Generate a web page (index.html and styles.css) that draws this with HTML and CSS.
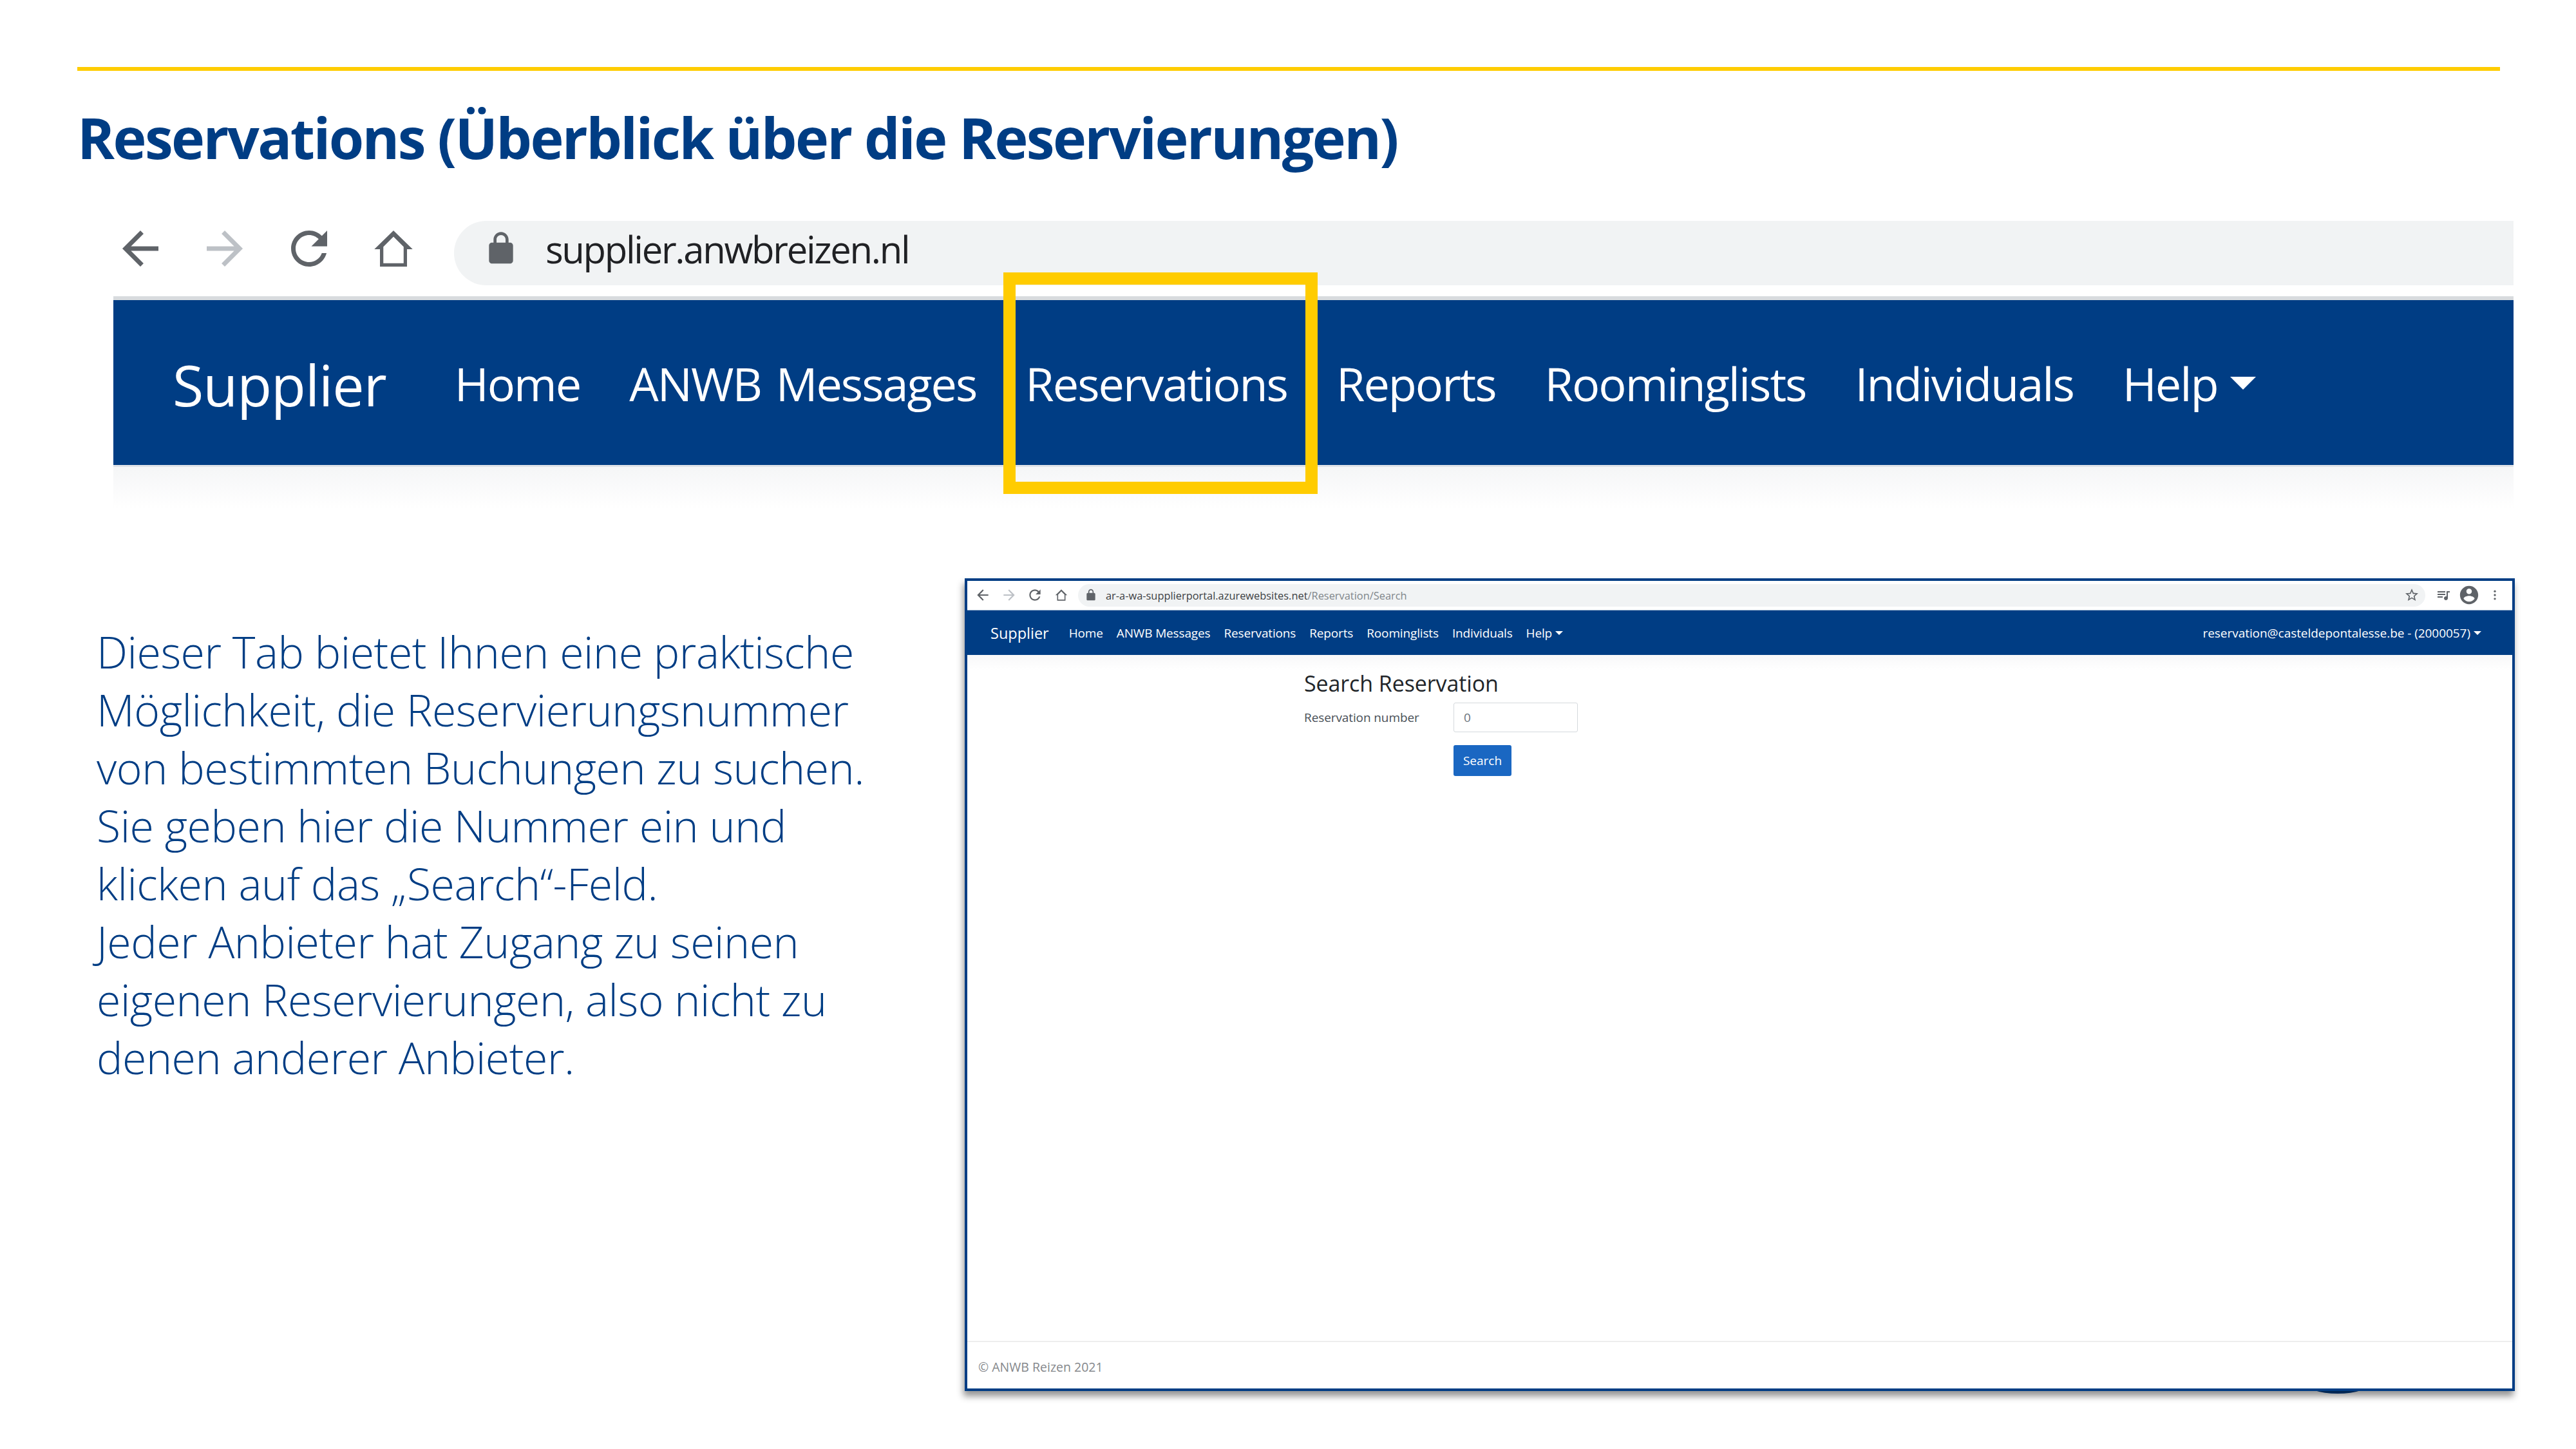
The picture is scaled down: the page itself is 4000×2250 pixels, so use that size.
FILE: index.html
```html
<!DOCTYPE html>
<html lang="de">
<head>
<meta charset="utf-8">
<title>Reservations</title>
<link rel="stylesheet" href="styles.css">
</head>
<body>
<main class="slide">
  <div class="rule"></div>
  <h1 class="title">Reservations (Überblick über die Reservierungen)</h1>

  <section class="hero">
    <div class="hero-toolbar">
      <svg class="hero-icon" viewBox="0 0 24 24"><path d="M20 11H7.83l5.59-5.59L12 4l-8 8 8 8 1.41-1.41L7.83 13H20v-2z"/></svg>
      <svg class="hero-icon faded" viewBox="0 0 24 24"><path d="M12 4l-1.41 1.41L16.17 11H4v2h12.17l-5.58 5.59L12 20l8-8z"/></svg>
      <svg class="hero-icon" viewBox="0 0 24 24"><path d="M17.65 6.35C16.2 4.9 14.21 4 12 4c-4.42 0-7.99 3.58-7.99 8s3.57 8 7.99 8c3.73 0 6.84-2.55 7.73-6h-2.08c-.82 2.33-3.04 4-5.65 4-3.31 0-6-2.69-6-6s2.69-6 6-6c1.66 0 3.14.69 4.22 1.78L13 11h7V4l-2.35 2.35z"/></svg>
      <svg class="hero-icon" viewBox="0 0 24 24"><path fill-rule="evenodd" d="M12 4L3.5 12.3H6V20h12v-7.7h2.5L12 4zM16.5 18.5h-9v-7.3L12 6.7l4.5 4.5v7.3z"/></svg>
      <div class="hero-address">
        <svg class="hero-lock" viewBox="0 0 24 24"><path d="M18 8h-1V6c0-2.76-2.24-5-5-5S7 3.24 7 6v2H6c-1.1 0-2 .9-2 2v10c0 1.1.9 2 2 2h12c1.1 0 2-.9 2-2V10c0-1.1-.9-2-2-2zM9 6c0-1.66 1.34-3 3-3s3 1.34 3 3v2H9V6z"/></svg>
        <span class="hero-url">supplier.anwbreizen.nl</span>
      </div>
    </div>
    <nav class="hero-nav">
      <span class="hero-brand">Supplier</span>
      <span class="hero-link">Home</span>
      <span class="hero-link">ANWB Messages</span>
      <span class="hero-link">Reservations</span>
      <span class="hero-link">Reports</span>
      <span class="hero-link">Roominglists</span>
      <span class="hero-link">Individuals</span>
      <span class="hero-link">Help<i class="hero-caret"></i></span>
    </nav>
    <div class="hero-shade"></div>
    <div class="highlight"></div>
  </section>

  <section class="content">
    <div class="copy">
      <p>Dieser Tab bietet Ihnen eine praktische</p>
      <p>Möglichkeit, die Reservierungsnummer</p>
      <p>von bestimmten Buchungen zu suchen.</p>
      <p>Sie geben hier die Nummer ein und</p>
      <p>klicken auf das „Search“-Feld.</p>
      <p>Jeder Anbieter hat Zugang zu seinen</p>
      <p>eigenen Reservierungen, also nicht zu</p>
      <p>denen anderer Anbieter.</p>
    </div>

    <div class="shot">
      <div class="shot-blob"></div>
      <div class="shot-frame">
        <div class="shot-toolbar">
          <svg class="shot-icon" viewBox="0 0 24 24"><path d="M20 11H7.83l5.59-5.59L12 4l-8 8 8 8 1.41-1.41L7.83 13H20v-2z"/></svg>
          <svg class="shot-icon faded" viewBox="0 0 24 24"><path d="M12 4l-1.41 1.41L16.17 11H4v2h12.17l-5.58 5.59L12 20l8-8z"/></svg>
          <svg class="shot-icon" viewBox="0 0 24 24"><path d="M17.65 6.35C16.2 4.9 14.21 4 12 4c-4.42 0-7.99 3.58-7.99 8s3.57 8 7.99 8c3.73 0 6.84-2.55 7.73-6h-2.08c-.82 2.33-3.04 4-5.65 4-3.31 0-6-2.69-6-6s2.69-6 6-6c1.66 0 3.14.69 4.22 1.78L13 11h7V4l-2.35 2.35z"/></svg>
          <svg class="shot-icon" viewBox="0 0 24 24"><path fill-rule="evenodd" d="M12 4L3.5 12.3H6V20h12v-7.7h2.5L12 4zM16.5 18.5h-9v-7.3L12 6.7l4.5 4.5v7.3z"/></svg>
          <div class="shot-address">
            <svg class="shot-lock" viewBox="0 0 24 24"><path d="M18 8h-1V6c0-2.76-2.24-5-5-5S7 3.24 7 6v2H6c-1.1 0-2 .9-2 2v10c0 1.1.9 2 2 2h12c1.1 0 2-.9 2-2V10c0-1.1-.9-2-2-2zM9 6c0-1.66 1.34-3 3-3s3 1.34 3 3v2H9V6z"/></svg>
            <span class="shot-url">ar-a-wa-supplierportal.azurewebsites.net<span class="shot-path">/Reservation/Search</span></span>
            <svg class="shot-star" viewBox="0 0 24 24"><path d="M22 9.24l-7.19-.62L12 2 9.19 8.63 2 9.24l5.46 4.73L5.82 21 12 17.27 18.18 21l-1.63-7.03L22 9.24zM12 15.4l-3.76 2.27 1-4.28-3.32-2.88 4.38-.38L12 6.1l1.71 4.04 4.38.38-3.32 2.88 1 4.28L12 15.4z"/></svg>
          </div>
          <svg class="shot-tool" viewBox="0 0 24 24"><path d="M15 6H3v2h12V6zm0 4H3v2h12v-2zM3 16h8v-2H3v2zM17 6v8.18c-.31-.11-.65-.18-1-.18-1.66 0-3 1.34-3 3s1.34 3 3 3 3-1.34 3-3V8h3V6h-5z"/></svg>
          <svg class="shot-account" viewBox="0 0 24 24"><path d="M12 2C6.48 2 2 6.48 2 12s4.48 10 10 10 10-4.48 10-10S17.52 2 12 2zm0 3c1.66 0 3 1.34 3 3s-1.34 3-3 3-3-1.34-3-3 1.34-3 3-3zm0 14.2c-2.5 0-4.71-1.28-6-3.22.03-1.99 4-3.08 6-3.08 1.99 0 5.97 1.09 6 3.08-1.29 1.94-3.5 3.22-6 3.22z"/></svg>
          <svg class="shot-dots" viewBox="0 0 24 24"><circle cx="12" cy="5" r="2"/><circle cx="12" cy="12" r="2"/><circle cx="12" cy="19" r="2"/></svg>
        </div>
        <nav class="shot-nav">
          <span class="shot-brand">Supplier</span>
          <span class="shot-link">Home</span>
          <span class="shot-link">ANWB Messages</span>
          <span class="shot-link">Reservations</span>
          <span class="shot-link">Reports</span>
          <span class="shot-link">Roominglists</span>
          <span class="shot-link">Individuals</span>
          <span class="shot-link">Help<i class="shot-caret"></i></span>
          <span class="shot-user">reservation@casteldepontalesse.be - (2000057)<i class="shot-caret"></i></span>
        </nav>
        <div class="shot-main">
          <h2 class="shot-heading">Search Reservation</h2>
          <div class="shot-row">
            <label class="shot-label">Reservation number</label>
            <div class="shot-input">0</div>
          </div>
          <div class="shot-button">Search</div>
        </div>
        <footer class="shot-footer">© ANWB Reizen 2021</footer>
      </div>
    </div>
  </section>
</main>
</body>
</html>
```
FILE: styles.css
```css
* { box-sizing: border-box; }
html, body { margin: 0; padding: 0; background: #fff; }
body { width: 4000px; height: 2250px; overflow: hidden; font-family: "Open Sans", "Liberation Sans", sans-serif; }
p, h1, h2 { margin: 0; }

.slide { display: flex; flex-direction: column; height: 2250px; padding-top: 104px; }
.rule { height: 6px; margin: 0 118px 0 120px; background: #ffcc00; }
.title { margin: 43px 0 0 120px; font-size: 88px; line-height: 120px; font-weight: 700; color: #003d84; letter-spacing: -2.6px; white-space: nowrap; }

.hero { position: relative; margin: 70px 97px 0 176px; }
.hero-toolbar { display: flex; align-items: center; height: 100px; }
.hero-icon { width: 84px; height: 84px; margin: 0 47px 14px 0; fill: #5f6368; flex: none; }
.hero-icon.faded, .shot-icon.faded { fill: #bdc1c6; }
.hero-address { display: flex; align-items: center; flex: 1; height: 100px; margin-left: 5px; padding: 0 0 14px 45px; background: #f1f3f4; border-radius: 50px 0 0 50px; }
.hero-lock { width: 56px; height: 56px; fill: #5f6368; flex: none; }
.hero-url { margin-left: 41px; font-size: 58px; color: #202124; letter-spacing: -2.3px; }
.hero-nav { display: flex; align-items: center; height: 265px; margin-top: 17px; padding: 2px 92px 0; gap: 76px; background: #003d84; background-clip: padding-box; border-top: 6px solid #d8dbde; border-bottom: 3px solid #dfe3e8; color: #fff; font-size: 72px; white-space: nowrap; }
.hero-brand { font-size: 88px; margin: 3px 30px 0 0; letter-spacing: -1px; }
.hero-link { display: flex; align-items: center; letter-spacing: -2px; word-spacing: 6px; }
.hero-caret { margin-left: 20px; border-top: 20px solid #fff; border-left: 20px solid transparent; border-right: 20px solid transparent; }
.hero-shade { height: 65px; background: linear-gradient(#f5f6f7, #fff); }
.highlight { position: absolute; left: 1382px; top: 80px; width: 488px; height: 344px; border: 19px solid #ffcc00; }

.content { display: flex; align-items: flex-start; margin: 108px 95px 0 150px; }
.copy { width: 1348px; padding-top: 69px; font-size: 68px; line-height: 90px; font-weight: 300; color: #003d84; letter-spacing: -0.45px; white-space: nowrap; }

.shot { position: relative; width: 2407px; height: 1262px; }
.shot-blob { position: absolute; left: 2080px; top: 1230px; width: 104px; height: 36px; border-radius: 50%; background: #003d84; }
.shot-frame { position: relative; display: flex; flex-direction: column; height: 100%; background: #fff; border: 4px solid #003d84; box-shadow: -2px 8px 10px rgba(0, 0, 0, .42); }

.shot-toolbar { display: flex; align-items: center; height: 45px; padding: 0 0 1px 11px; }
.shot-icon { width: 26px; height: 26px; margin-right: 14.5px; fill: #5f6368; flex: none; }
.shot-address { display: flex; align-items: center; width: 2092px; height: 35px; margin-left: -1px; padding: 0 9px 0 12px; background: #f1f3f4; border-radius: 18px; }
.shot-lock { width: 20px; height: 20px; margin-left: -2px; fill: #5f6368; flex: none; }
.shot-url { margin-left: 13px; font-size: 16.4px; color: #3c4043; white-space: nowrap; }
.shot-path { color: #80868b; }
.shot-star { width: 24px; height: 24px; margin-left: auto; fill: #5f6368; }
.shot-tool { width: 24px; height: 24px; margin-left: 16px; fill: #5f6368; flex: none; }
.shot-account { width: 34px; height: 34px; margin-left: 11px; fill: #5f6368; flex: none; }
.shot-dots { width: 20px; height: 20px; margin-left: 13px; fill: #5f6368; flex: none; }

.shot-nav { display: flex; align-items: center; height: 70px; padding: 0 48px 0 36px; gap: 21px; background: #003d84; border-top: 1px solid #8fa9c7; color: #fff; font-size: 19px; letter-spacing: -0.15px; white-space: nowrap; }
.shot-brand { font-size: 23.5px; margin-right: 10px; letter-spacing: 0; }
.shot-link { display: flex; align-items: center; }
.shot-user { display: flex; align-items: center; margin-left: auto; letter-spacing: -0.05px; }
.shot-caret { margin-left: 5px; border-top: 6px solid #fff; border-left: 6px solid transparent; border-right: 6px solid transparent; }

.shot-main { flex: 1; padding: 21px 0 0 523px; background: linear-gradient(#f8f8f9, #fff 24px); }
.shot-heading { font-size: 34px; line-height: 46px; font-weight: 400; color: #212529; letter-spacing: -0.1px; }
.shot-row { display: flex; align-items: center; margin-top: 7px; }
.shot-label { width: 232px; font-size: 19px; color: #495057; letter-spacing: -0.1px; }
.shot-input { display: flex; align-items: center; width: 193px; height: 46px; padding-left: 15px; border: 1px solid #d5d9dd; border-radius: 3px; font-size: 19px; color: #6c757d; }
.shot-button { display: flex; align-items: center; justify-content: center; width: 90px; height: 48px; margin: 20px 0 0 232px; background: #1a67c2; border-radius: 3px; color: #fff; font-size: 19px; }

.shot-footer { height: 74px; padding: 26px 0 0 17px; border-top: 2px solid #eeeeee; font-size: 19.5px; line-height: 26px; color: #85888c; }
```
